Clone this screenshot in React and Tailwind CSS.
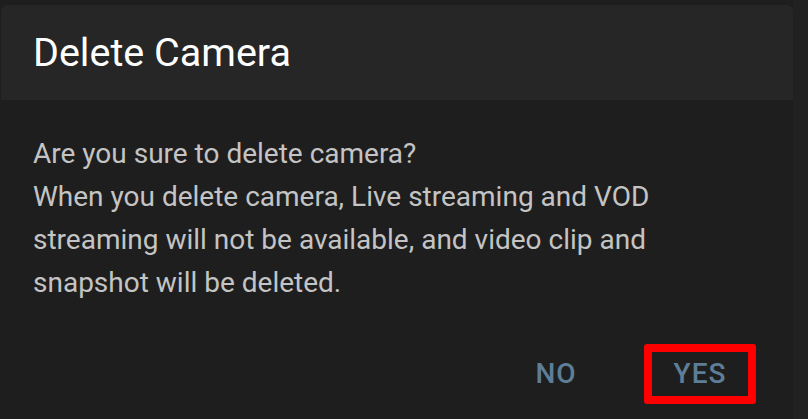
export default function App() {
  return (
    <div className="flex h-[419px] w-[808px] bg-[#212121] font-['Roboto',sans-serif]">
      {/* dialog */}
      <div className="flex w-[793px] flex-col bg-[#1e1e1e] pl-[1px] pt-[5px]">
        <div className="flex h-[95px] items-center rounded-t-[6px] bg-[#262626] px-[32px]">
          <h2 className="text-[39.5px] font-normal leading-none text-white">Delete Camera</h2>
        </div>
        <div className="px-[32px] pt-[32px] text-[28px] leading-[43px] text-[#c4c4c4]">
          <p>Are you sure to delete camera?</p>
          <p>
            When you delete camera, Live streaming and VOD streaming will not be available, and video clip
            and snapshot will be deleted.
          </p>
        </div>
        <div className="mt-[40px] flex justify-end gap-[32px] pr-[37px]">
          <button className="flex h-[60px] w-[112px] items-center justify-center text-[28px] font-medium tracking-[1px] text-[#5e7e98]">
            NO
          </button>
          <button className="flex h-[60px] w-[112px] items-center justify-center rounded-[3px] border-[8px] border-[#ff0000] text-[28px] font-medium tracking-[1px] text-[#5e7e98]">
            YES
          </button>
        </div>
      </div>
    </div>
  );
}
